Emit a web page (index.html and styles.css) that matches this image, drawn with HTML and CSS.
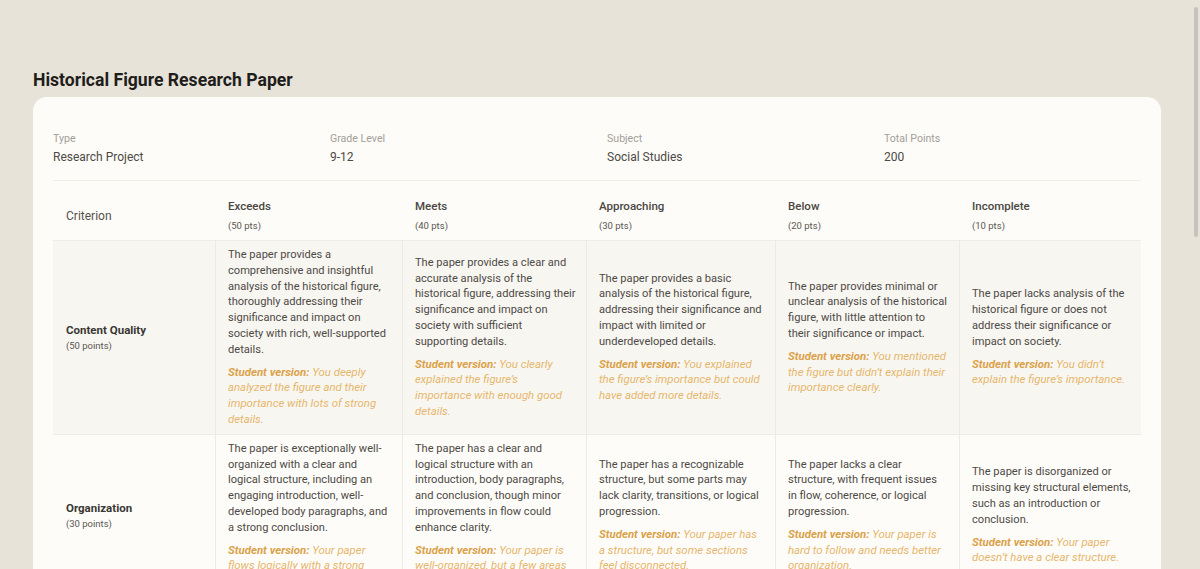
FILE: index.html
```html
<!DOCTYPE html>
<html lang="en">
<head>
<meta charset="utf-8">
<title>Historical Figure Research Paper</title>
<link rel="stylesheet" href="styles.css">
</head>
<body>
<div class="page">
  <h1 class="title">Historical Figure Research Paper</h1>
  <div class="card">
    <div class="meta">
      <div class="meta-item"><div class="meta-label">Type</div><div class="meta-value">Research Project</div></div>
      <div class="meta-item"><div class="meta-label">Grade Level</div><div class="meta-value">9-12</div></div>
      <div class="meta-item"><div class="meta-label">Subject</div><div class="meta-value">Social Studies</div></div>
      <div class="meta-item"><div class="meta-label">Total Points</div><div class="meta-value">200</div></div>
    </div>
    <table class="rubric">
      <colgroup>
        <col class="c-crit"><col class="c-ex"><col class="c-me"><col class="c-ap"><col class="c-be"><col class="c-in">
      </colgroup>
      <thead>
        <tr>
          <th class="h-crit">Criterion</th>
          <th><div class="lvl">Exceeds</div><div class="pts">(50 pts)</div></th>
          <th><div class="lvl">Meets</div><div class="pts">(40 pts)</div></th>
          <th><div class="lvl">Approaching</div><div class="pts">(30 pts)</div></th>
          <th><div class="lvl">Below</div><div class="pts">(20 pts)</div></th>
          <th><div class="lvl">Incomplete</div><div class="pts">(10 pts)</div></th>
        </tr>
      </thead>
      <tbody>
        <tr class="alt">
          <td class="crit"><div class="crit-name">Content Quality</div><div class="crit-pts">(50 points)</div></td>
          <td><p class="desc">The paper provides a comprehensive and insightful analysis of the historical figure, thoroughly addressing their significance and impact on society with rich, well-supported details.</p><p class="student"><strong>Student version:</strong> You deeply analyzed the figure and their importance with lots of strong details.</p></td>
          <td class="me"><p class="desc">The paper provides a clear and accurate analysis of the historical figure, addressing their significance and impact on society with sufficient supporting details.</p><p class="student"><strong>Student version:</strong> You clearly explained the figure’s importance with enough good details.</p></td>
          <td class="ap"><p class="desc">The paper provides a basic analysis of the historical figure, addressing their significance and impact with limited or underdeveloped details.</p><p class="student"><strong>Student version:</strong> You explained the figure’s importance but could have added more details.</p></td>
          <td><p class="desc">The paper provides minimal or unclear analysis of the historical figure, with little attention to their significance or impact.</p><p class="student"><strong>Student version:</strong> You mentioned the figure but didn’t explain their importance clearly.</p></td>
          <td class="in"><p class="desc">The paper lacks analysis of the historical figure or does not address their significance or impact on society.</p><p class="student"><strong>Student version:</strong> You didn’t explain the figure’s importance.</p></td>
        </tr>
        <tr>
          <td class="crit"><div class="crit-name">Organization</div><div class="crit-pts">(30 points)</div></td>
          <td><p class="desc">The paper is exceptionally well-organized with a clear and logical structure, including an engaging introduction, well-developed body paragraphs, and a strong conclusion.</p><p class="student"><strong>Student version:</strong> Your paper flows logically with a strong beginning, middle, and end.</p></td>
          <td class="me"><p class="desc">The paper has a clear and logical structure with an introduction, body paragraphs, and conclusion, though minor improvements in flow could enhance clarity.</p><p class="student"><strong>Student version:</strong> Your paper is well-organized, but a few areas could flow better.</p></td>
          <td class="ap"><p class="desc">The paper has a recognizable structure, but some parts may lack clarity, transitions, or logical progression.</p><p class="student"><strong>Student version:</strong> Your paper has a structure, but some sections feel disconnected.</p></td>
          <td><p class="desc">The paper lacks a clear structure, with frequent issues in flow, coherence, or logical progression.</p><p class="student"><strong>Student version:</strong> Your paper is hard to follow and needs better organization.</p></td>
          <td class="in"><p class="desc">The paper is disorganized or missing key structural elements, such as an introduction or conclusion.</p><p class="student"><strong>Student version:</strong> Your paper doesn’t have a clear structure.</p></td>
        </tr>
        <tr class="alt">
          <td class="crit"><div class="crit-name">Use of Sources</div><div class="crit-pts">(40 points)</div></td>
          <td><p class="desc">The paper uses a wide range of credible primary and secondary sources, integrating evidence smoothly to support every major point.</p><p class="student"><strong>Student version:</strong> You used many reliable sources and connected them to your ideas.</p></td>
          <td class="me"><p class="desc">The paper uses credible sources that support most major points, with generally effective integration of evidence.</p><p class="student"><strong>Student version:</strong> You used good sources to back up most of your ideas.</p></td>
          <td class="ap"><p class="desc">The paper uses a limited number of sources, some of which may be less credible or loosely connected to the argument.</p><p class="student"><strong>Student version:</strong> You used some sources, but they don’t always support your points.</p></td>
          <td><p class="desc">The paper relies on very few or unreliable sources, with little connection to the ideas presented.</p><p class="student"><strong>Student version:</strong> You need more reliable sources.</p></td>
          <td class="in"><p class="desc">The paper does not use sources or uses them inappropriately.</p><p class="student"><strong>Student version:</strong> You didn’t use sources to support your work.</p></td>
        </tr>
        <tr>
          <td class="crit"><div class="crit-name">Historical Context</div><div class="crit-pts">(40 points)</div></td>
          <td><p class="desc">The paper places the figure firmly within their historical period, explaining the events and conditions that shaped their life and legacy.</p><p class="student"><strong>Student version:</strong> You showed exactly how the times shaped the figure.</p></td>
          <td class="me"><p class="desc">The paper describes the historical period clearly and connects it to the figure’s actions and influence.</p><p class="student"><strong>Student version:</strong> You explained the time period and how it connects to the figure.</p></td>
          <td class="ap"><p class="desc">The paper mentions the historical period but only partially connects it to the figure.</p><p class="student"><strong>Student version:</strong> You described the time period but could connect it more.</p></td>
          <td><p class="desc">The paper gives little or inaccurate historical context.</p><p class="student"><strong>Student version:</strong> You need to explain more about when the figure lived.</p></td>
          <td class="in"><p class="desc">The paper provides no historical context.</p><p class="student"><strong>Student version:</strong> You didn’t describe the time period.</p></td>
        </tr>
        <tr class="alt">
          <td class="crit"><div class="crit-name">Writing Mechanics</div><div class="crit-pts">(40 points)</div></td>
          <td><p class="desc">The paper is virtually free of errors in grammar, spelling, punctuation, and citation format.</p><p class="student"><strong>Student version:</strong> Your writing is clean and correct.</p></td>
          <td class="me"><p class="desc">The paper has a few minor errors that do not distract from the content.</p><p class="student"><strong>Student version:</strong> You have a few small mistakes.</p></td>
          <td class="ap"><p class="desc">The paper has several errors that occasionally distract the reader.</p><p class="student"><strong>Student version:</strong> Some mistakes make your paper harder to read.</p></td>
          <td><p class="desc">The paper has frequent errors that interfere with understanding.</p><p class="student"><strong>Student version:</strong> Many mistakes make your paper hard to understand.</p></td>
          <td class="in"><p class="desc">The paper has pervasive errors that make it difficult to read.</p><p class="student"><strong>Student version:</strong> Your paper needs careful proofreading.</p></td>
        </tr>
      </tbody>
    </table>
  </div>
</div>
<div class="scroll-thumb" aria-hidden="true"></div>
</body>
</html>
```

FILE: styles.css
```css
html, body {
  margin: 0;
  padding: 0;
}

body {
  background: #e7e3d9;
  font-family: Roboto, "Liberation Sans", sans-serif;
  color: #4d4a46;
}

.scroll-thumb {
  position: fixed;
  top: 7px;
  right: 2px;
  width: 4px;
  height: 230px;
  border-radius: 2px;
  background: #c6c3bd;
}

.page {
  width: 1128px;
  padding: 68px 0 60px 33px;
}

.title {
  margin: 0 0 5px;
  font-size: 17.6px;
  line-height: 24px;
  font-weight: 700;
  color: #1f1d1a;
}

.card {
  background: #fdfcf8;
  border-radius: 14px;
  padding: 20px;
}

.meta {
  display: grid;
  grid-template-columns: repeat(4, 1fr);
  gap: 20px;
  padding: 15px 0 15px;
  border-bottom: 1px solid #f1eee8;
  margin-bottom: 9px;
}

.meta-label {
  font-size: 10.6px;
  line-height: 14px;
  color: #a29e98;
}

.meta-value {
  margin-top: 3px;
  font-size: 12px;
  line-height: 16px;
  color: #4d4a46;
}

.rubric {
  width: 100%;
  table-layout: fixed;
  border-collapse: separate;
  border-spacing: 0;
}

.c-crit { width: 162px; }
.c-ex { width: 187px; }
.c-me { width: 184px; }
.c-ap { width: 189px; }
.c-be { width: 184px; }
.c-in { width: 182px; }

.rubric th {
  text-align: left;
  font-weight: 400;
  vertical-align: middle;
  padding: 8px 12px 7px 13px;
  border-bottom: 1px solid #efece6;
}

.rubric th.h-crit {
  font-size: 12px;
  color: #55524d;
}

.lvl {
  font-size: 11.5px;
  line-height: 16px;
  font-weight: 500;
  color: #4a4743;
}

.pts {
  margin-top: 5px;
  font-size: 9.5px;
  line-height: 14px;
  color: #5a5752;
}

.rubric td {
  vertical-align: middle;
  padding: 6px 12px;
  border-left: 1px solid #eeebe5;
  border-bottom: 1px solid #efece6;
  font-size: 11.1px;
  line-height: 15.8px;
}

.rubric td.me {
  padding-right: 10px;
}

.rubric td.ap {
  padding-right: 12px;
}

.rubric td.in {
  padding-right: 8px;
}

.rubric td.crit {
  border-left: none;
  padding-left: 13px;
}

.rubric tr.alt td {
  background: #f8f6f1;
}

.crit-name {
  font-size: 11.5px;
  line-height: 16px;
  font-weight: 700;
  color: #3a3834;
}

.crit-pts {
  margin-top: 1px;
  font-size: 9.5px;
  line-height: 14px;
  color: #5a5752;
}

.desc {
  margin: 0;
  color: #4d4a46;
}

.student {
  margin: 7px 0 0;
  font-style: italic;
  font-size: 11.4px;
  color: #e6b66c;
}

.student strong {
  font-weight: 700;
  color: #dba24a;
}
```
